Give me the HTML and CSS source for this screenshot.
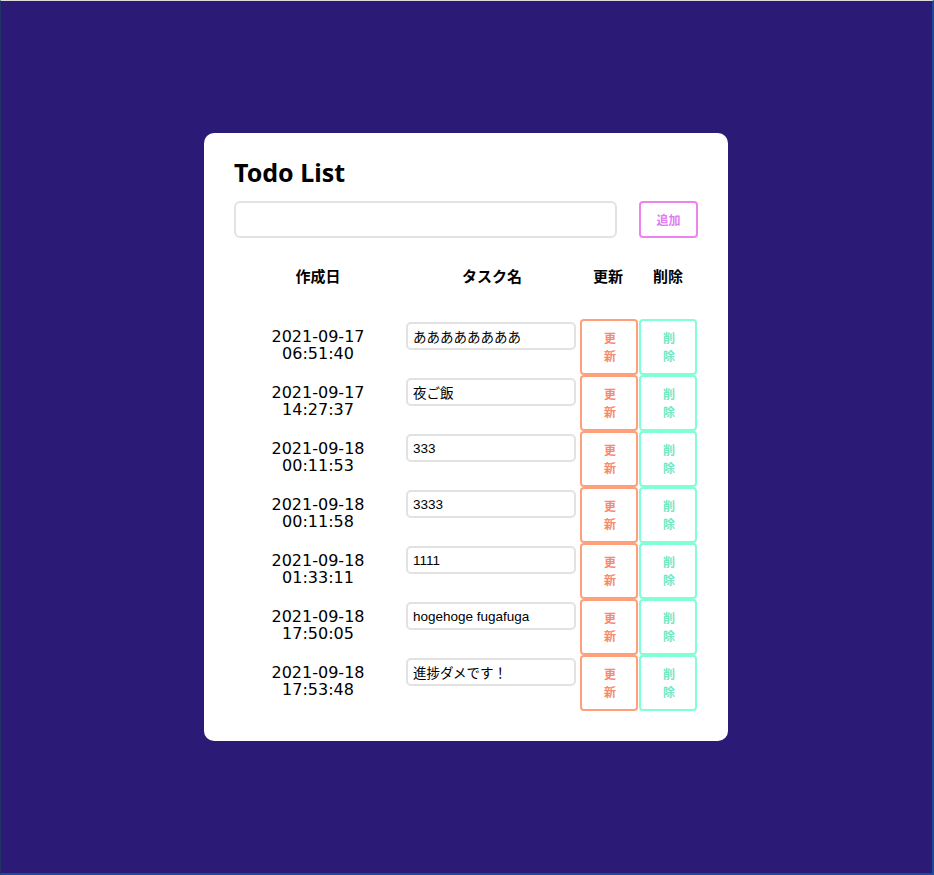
FILE: index.html
```html
<!DOCTYPE html>
<html lang="ja">
<head>
<meta charset="utf-8">
<title>Todo List</title>
<link rel="stylesheet" href="styles.css">
</head>
<body>
<main class="card">
  <h1 class="title">Todo List</h1>
  <div class="add-row">
    <input class="add-input" type="text">
    <button class="btn btn-add">追加</button>
  </div>
  <table class="todo-table">
    <thead>
      <tr>
        <th class="col-date">作成日</th>
        <th class="col-task">タスク名</th>
        <th class="col-btn">更新</th>
        <th class="col-btn">削除</th>
      </tr>
    </thead>
    <tbody>
      <tr>
        <td class="date">2021-09-17<br>06:51:40</td>
        <td class="task"><input class="task-input" type="text" value="ああああああああ"></td>
        <td><button class="btn btn-update">更新</button></td>
        <td><button class="btn btn-delete">削除</button></td>
      </tr>
      <tr>
        <td class="date">2021-09-17<br>14:27:37</td>
        <td class="task"><input class="task-input" type="text" value="夜ご飯"></td>
        <td><button class="btn btn-update">更新</button></td>
        <td><button class="btn btn-delete">削除</button></td>
      </tr>
      <tr>
        <td class="date">2021-09-18<br>00:11:53</td>
        <td class="task"><input class="task-input" type="text" value="333"></td>
        <td><button class="btn btn-update">更新</button></td>
        <td><button class="btn btn-delete">削除</button></td>
      </tr>
      <tr>
        <td class="date">2021-09-18<br>00:11:58</td>
        <td class="task"><input class="task-input" type="text" value="3333"></td>
        <td><button class="btn btn-update">更新</button></td>
        <td><button class="btn btn-delete">削除</button></td>
      </tr>
      <tr>
        <td class="date">2021-09-18<br>01:33:11</td>
        <td class="task"><input class="task-input" type="text" value="1111"></td>
        <td><button class="btn btn-update">更新</button></td>
        <td><button class="btn btn-delete">削除</button></td>
      </tr>
      <tr>
        <td class="date">2021-09-18<br>17:50:05</td>
        <td class="task"><input class="task-input" type="text" value="hogehoge fugafuga"></td>
        <td><button class="btn btn-update">更新</button></td>
        <td><button class="btn btn-delete">削除</button></td>
      </tr>
      <tr>
        <td class="date">2021-09-18<br>17:53:48</td>
        <td class="task"><input class="task-input" type="text" value="進捗ダメです！"></td>
        <td><button class="btn btn-update">更新</button></td>
        <td><button class="btn btn-delete">削除</button></td>
      </tr>
    </tbody>
  </table>
</main>
</body>
</html>
```

FILE: styles.css
```css
* { box-sizing: border-box; }

html, body {
  margin: 0;
  height: 100%;
}

body {
  background: #2c1a77;
  border-top: 1px solid #dcdcdc;
  border-left: 1px solid #1e3566;
  border-right: 2px solid #1d4b9b;
  border-bottom: 2px solid #1d4b9b;
  padding-right: 1px;
  display: flex;
  align-items: center;
  justify-content: center;
  font-family: "Noto Sans", "Noto Sans CJK JP", sans-serif;
  color: #000;
}

.card {
  width: 524px;
  height: 608px;
  background: #fff;
  border-radius: 10px;
  padding: 22px 30px 29px;
}

.title {
  margin: 0 0 12px;
  font-size: 25px;
  line-height: 34px;
  font-weight: 700;
}

.add-row {
  display: flex;
  align-items: center;
  gap: 22px;
}

.add-input {
  width: 383px;
  height: 37px;
  border: 2px solid #e2e2e2;
  border-radius: 6px;
  outline: none;
}

.btn {
  background: #fff;
  border: 2px solid;
  border-radius: 4px;
  font-family: "Noto Sans CJK JP", sans-serif;
  font-size: 12px;
  line-height: 18px;
  font-weight: 700;
  cursor: pointer;
}

.btn-add {
  width: 59px;
  height: 37px;
  border-color: #ee82ee;
  color: #e07cf2;
  padding: 0;
}

.todo-table {
  margin-top: 16px;
  width: 464px;
  border-collapse: collapse;
  table-layout: fixed;
}

.todo-table th {
  height: 65px;
  padding: 12px 0 0;
  vertical-align: top;
  font-family: "Noto Sans CJK JP", sans-serif;
  font-size: 15px;
  line-height: 20px;
  font-weight: 700;
  text-align: center;
}

.todo-table th.col-date { width: 172px; padding-right: 4px; }
.todo-table th.col-task { width: 172px; }
.todo-table th.col-btn { width: 60px; }

.todo-table tbody tr {
  height: 56px;
}

.todo-table td {
  padding: 0;
  vertical-align: top;
}

.todo-table td.date {
  padding: 9px 4px 0 0;
  text-align: center;
  font-family: "DejaVu Sans", sans-serif;
  font-size: 16px;
  line-height: 17px;
}

.todo-table td.task {
  padding-top: 3px;
}

.task-input {
  display: block;
  width: 170px;
  height: 28px;
  border: 2px solid #e2e2e2;
  border-radius: 5px;
  padding: 0 5px;
  font-family: "Liberation Sans", "Noto Sans CJK JP", sans-serif;
  font-size: 13.5px;
  color: #000;
  outline: none;
}

.btn-update,
.btn-delete {
  display: block;
  width: 58px;
  height: 56px;
  padding: 0 22px;
  word-break: break-all;
}

.btn-update {
  border-color: #ffa07a;
  color: #f58a6e;
  margin-left: 2px;
}

.btn-delete {
  border-color: #7fffd4;
  color: #6fe8c6;
  margin-left: 1px;
}
```
